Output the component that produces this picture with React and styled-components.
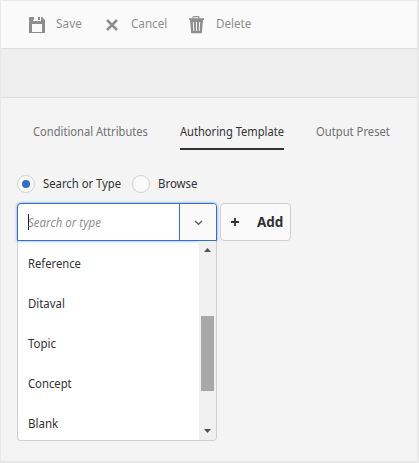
import React, { useLayoutEffect, useRef, useState } from "react";
import styled, { createGlobalStyle } from "styled-components";

const GlobalStyle = createGlobalStyle`
  *, *::before, *::after { box-sizing: border-box; }
  body { margin: 0; background: #e8e8e8; font-family: "Noto Sans", "Open Sans", sans-serif; }
`;

const Frame = styled.div`
  width: 419px;
  height: 463px;
  border: solid #e8e8e8;
  border-width: 1px 2px 2px 1px;
  background: #f4f4f4;
  overflow: hidden;
`;

const Toolbar = styled.header`
  display: flex;
  align-items: center;
  height: 48px;
  padding: 0 0 1px 27px;
  background: #fafafa;
  border-bottom: 1px solid #dedede;
`;

const Action = styled.div`
  display: flex;
  align-items: center;
  width: ${(p) => p.$width}px;
  svg { display: block; flex: none; margin: 2px ${(p) => p.$gap}px 0 0; }
`;

const SubBar = styled.div`
  height: 49px;
  background: #efefef;
  border-bottom: 1px solid #dedede;
`;

const Tabs = styled.nav`
  display: flex;
  gap: 32px;
  height: 53px;
  padding: 23px 0 0 32px;
`;

const Tab = styled.div`
  height: 29px;
  color: ${(p) => (p.$active ? "#323232" : "#707070")};
  border-bottom: 2px solid ${(p) => (p.$active ? "#323232" : "transparent")};
`;

const LabelBox = styled.span`
  display: block;
  flex: none;
  width: ${(p) => p.$width}px;
  height: 22px;
  line-height: 22px;
  font-size: ${(p) => p.$size || 12.3}px;
  font-weight: ${(p) => (p.$bold ? 700 : 400)};
  font-style: ${(p) => (p.$italic ? "italic" : "normal")};
  color: ${(p) => p.$color || "inherit"};
`;

const LabelText = styled.span`
  display: inline-block;
  white-space: nowrap;
  transform-origin: 0 50%;
`;

function Label({ children, width, size, color, bold, italic }) {
  const ref = useRef(null);
  const [scale, setScale] = useState(1);
  useLayoutEffect(() => {
    setScale(width / ref.current.offsetWidth);
  }, [width, children]);
  return (
    <LabelBox $width={width} $size={size} $color={color} $bold={bold} $italic={italic}>
      <LabelText ref={ref} style={{ transform: `scaleX(${scale})` }}>{children}</LabelText>
    </LabelBox>
  );
}

const Form = styled.main`
  padding: 24px 0 0 16px;
  color: #323232;
`;

const Radios = styled.div`
  display: flex;
  align-items: center;
  height: 18px;
`;

const Radio = styled.span`
  display: flex;
  align-items: center;
  justify-content: center;
  flex: none;
  width: 18px;
  height: 18px;
  margin: 0 8px 0 ${(p) => p.$left || 0}px;
  border: 1px solid #d0d0d0;
  border-radius: 50%;
  background: #fafafa;
  &::after {
    content: "";
    width: 8px;
    height: 8px;
    border-radius: 50%;
    background: ${(p) => (p.$checked ? "#326ec8" : "transparent")};
  }
`;

const Controls = styled.div`
  display: flex;
  gap: 3px;
  margin-top: 10px;
`;

const Combo = styled.div`
  display: flex;
  width: 200px;
  height: 38px;
  border: 1px solid #326ec8;
  border-radius: 4px 4px 0 0;
  background: #fff;
  box-shadow: 0 0 3px rgba(50, 110, 200, 0.65);
  overflow: hidden;
`;

const Field = styled.div`
  display: flex;
  align-items: center;
  width: 162px;
  padding: 1px 0 0 10px;
  border-right: 1px solid #326ec8;
`;

const Caret = styled.span`
  width: 1px;
  height: 16px;
  margin: -1px -1px 0 0;
  background: #222;
`;

const Toggle = styled.div`
  display: flex;
  flex: 1;
  align-items: center;
  justify-content: center;
  padding-top: 2px;
  background: #fafafa;
`;

const AddButton = styled.div`
  display: flex;
  align-items: center;
  width: 71px;
  height: 38px;
  padding-left: 10px;
  border: 1px solid #d0d0d0;
  border-radius: 4px;
  background: #fafafa;
  svg { display: block; margin-right: 18px; }
`;

const Menu = styled.div`
  display: flex;
  width: 200px;
  height: 200px;
  border: 1px solid #d0d0d0;
  border-top: 0;
  border-radius: 0 0 4px 4px;
  background: #fff;
  overflow: hidden;
`;

const Options = styled.div`
  flex: 1;
  padding: 3px 0 0 10px;
`;

const Option = styled.div`
  display: flex;
  align-items: center;
  height: 40px;
`;

const Scrollbar = styled.div`
  display: flex;
  flex-direction: column;
  align-items: center;
  width: 17px;
  padding: 7px 0;
  background: #f0f0f0;
`;

const Thumb = styled.div`
  width: 13px;
  height: 75px;
  margin: 64px 0 38px;
  background: #a8a8a8;
`;

const SaveIcon = () => (
  <svg width="18" height="18" viewBox="0 0 18 18">
    <path fill="#8e8e8e" fillRule="evenodd" d="M1 1H14L17 4V17H1ZM4 8V16H14V8ZM5 1V5H13V1Z" />
    <path fill="#8e8e8e" d="M5 1h1v3H5zM10 1h2v3h-2z" />
  </svg>
);

const CancelIcon = () => (
  <svg width="12" height="12" viewBox="0 0 12 12">
    <path d="M1 1L11 11M11 1L1 11" fill="none" stroke="#8e8e8e" strokeWidth="2.5" />
  </svg>
);

const DeleteIcon = () => (
  <svg width="16" height="18" viewBox="0 0 16 18">
    <path d="M5 3V1.5Q5 .7 6 .7H10Q11 .7 11 1.5V3" fill="none" stroke="#8e8e8e" strokeWidth="1.2" />
    <path d="M1 2.2H16V4H1ZM2 4H15L13.8 17.3H3.2Z" fill="#8e8e8e" />
    <path d="M5.3 6L5.8 15M8.5 6V15M11.7 6L11.2 15" stroke="#f7f7f7" strokeWidth="1" />
  </svg>
);

const options = [["Reference", 53], ["Ditaval", 37], ["Topic", 28], ["Concept", 44], ["Blank", 30]];

export default function App() {
  return (
    <>
      <GlobalStyle />
      <Frame>
        <Toolbar>
          <Action $width={78} $gap={10}><SaveIcon /><Label width={26} color="#8e8e8e">Save</Label></Action>
          <Action $width={82} $gap={13}><CancelIcon /><Label width={36} color="#8e8e8e">Cancel</Label></Action>
          <Action $width={70} $gap={12}><DeleteIcon /><Label width={35} color="#8e8e8e">Delete</Label></Action>
        </Toolbar>
        <SubBar />
        <Tabs>
          <Tab><Label width={115}>Conditional Attributes</Label></Tab>
          <Tab $active><Label width={104}>Authoring Template</Label></Tab>
          <Tab><Label width={74}>Output Preset</Label></Tab>
        </Tabs>
        <Form>
          <Radios>
            <Radio $checked /><Label width={78}>Search or Type</Label>
            <Radio $left={11} /><Label width={40}>Browse</Label>
          </Radios>
          <Controls>
            <Combo>
              <Field><Caret /><Label width={73} italic color="#919191">Search or type</Label></Field>
              <Toggle>
                <svg width="9" height="6" viewBox="0 0 9 6"><path d="M1 1L4.5 4.3L8 1" fill="none" stroke="#666" strokeWidth="1.5" /></svg>
              </Toggle>
            </Combo>
            <AddButton>
              <svg width="8" height="8" viewBox="0 0 8 8"><path d="M4 0V8M0 4H8" stroke="#323232" strokeWidth="1.8" /></svg>
              <Label width={26} size={14} bold>Add</Label>
            </AddButton>
          </Controls>
          <Menu>
            <Options>
              {options.map(([name, width]) => (
                <Option key={name}><Label width={width}>{name}</Label></Option>
              ))}
            </Options>
            <Scrollbar>
              <svg width="7" height="4" viewBox="0 0 7 4"><path d="M0 4L3.5 0L7 4Z" fill="#505050" /></svg>
              <Thumb />
              <svg width="7" height="4" viewBox="0 0 7 4"><path d="M0 0L3.5 4L7 0Z" fill="#505050" /></svg>
            </Scrollbar>
          </Menu>
        </Form>
      </Frame>
    </>
  );
}
